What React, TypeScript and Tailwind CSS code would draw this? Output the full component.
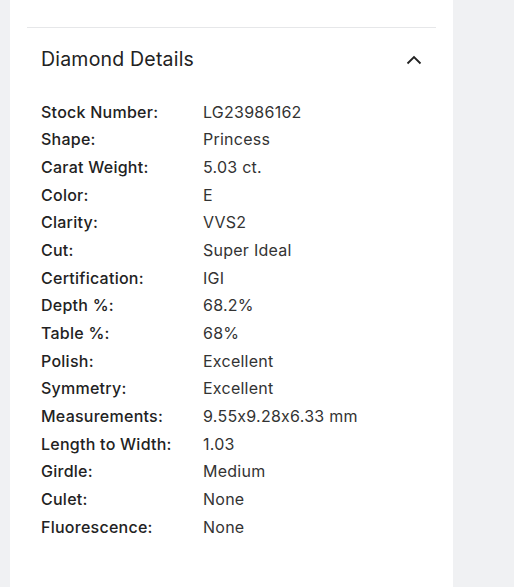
import React from "react";

const rows: [string, string][] = [
  ["Stock Number:", "LG23986162"],
  ["Shape:", "Princess"],
  ["Carat Weight:", "5.03 ct."],
  ["Color:", "E"],
  ["Clarity:", "VVS2"],
  ["Cut:", "Super Ideal"],
  ["Certification:", "IGI"],
  ["Depth %:", "68.2%"],
  ["Table %:", "68%"],
  ["Polish:", "Excellent"],
  ["Symmetry:", "Excellent"],
  ["Measurements:", "9.55x9.28x6.33 mm"],
  ["Length to Width:", "1.03"],
  ["Girdle:", "Medium"],
  ["Culet:", "None"],
  ["Fluorescence:", "None"],
];

export default function App() {
  return (
    <div
      className="h-[587px] w-[514px] bg-[#f0f1f3] pl-[10px] overflow-hidden [font-feature-settings:'calt'_0]"
      style={{ fontFamily: "Inter, 'Noto Sans', sans-serif" }}
    >
      <div className="h-full w-[443px] bg-white px-[17px]">
        <div className="h-[28px] border-b border-[#e6e7e9]" />
        <div className="px-[14px]">
          <div className="flex items-center justify-between h-[64px]">
            <h2 className="text-[19.5px] text-[#222] font-normal tracking-[0.2px]">Diamond Details</h2>
            <svg width="16" height="10" viewBox="0 0 16 10" fill="none" stroke="#222" strokeWidth="1.8">
              <path d="M1.5 8.5L8 2l6.5 6.5" />
            </svg>
          </div>
          <div className="mt-[6px] flex flex-col">
            {rows.map(([k, v]) => (
              <div key={k} className="flex h-[27.67px] items-center text-[16px] tracking-[0.25px]">
                <div className="w-[162px] shrink-0 font-medium text-[#222]">{k}</div>
                <div className="text-[#333]">{v}</div>
              </div>
            ))}
          </div>
        </div>
      </div>
    </div>
  );
}
